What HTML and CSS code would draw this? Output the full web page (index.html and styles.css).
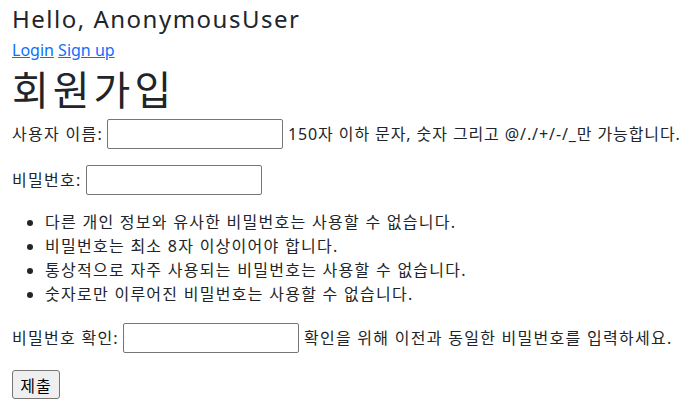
FILE: index.html
```html
<!DOCTYPE html>
<html lang="ko">
<head>
<meta charset="utf-8">
<title>회원가입</title>
<link rel="stylesheet" href="styles.css">
</head>
<body>
<div class="container">
  <h3 class="greeting">Hello, AnonymousUser</h3>
  <div class="links"><a href="#">Login</a> <a href="#">Sign up</a></div>
  <h1 class="title">회원가입</h1>
  <form class="signup">
    <p class="row"><label class="ko">사용자 이름:</label><input type="text" class="field"><span class="helptext mixed">150자 이하 문자, 숫자 그리고 @/./+/-/_만 가능합니다.</span></p>
    <p class="row"><label class="ko">비밀번호:</label><input type="password" class="field"></p>
    <ul class="rules ko">
      <li>다른 개인 정보와 유사한 비밀번호는 사용할 수 없습니다.</li>
      <li>비밀번호는 최소 8자 이상이어야 합니다.</li>
      <li>통상적으로 자주 사용되는 비밀번호는 사용할 수 없습니다.</li>
      <li>숫자로만 이루어진 비밀번호는 사용할 수 없습니다.</li>
    </ul>
    <p class="row"><label class="ko">비밀번호 확인:</label><input type="password" class="field"><span class="helptext ko">확인을 위해 이전과 동일한 비밀번호를 입력하세요.</span></p>
    <button type="button" class="submit">제출</button>
  </form>
</div>
</body>
</html>
```
FILE: styles.css
```css
* { box-sizing: border-box; }
html, body { margin: 0; padding: 0; background: #fff; }
body {
  font-family: "Noto Sans", "Noto Sans CJK KR", sans-serif;
  font-size: 16px;
  line-height: 24px;
  color: #212529;
}
.container { padding: 0 12px; }
.greeting {
  margin: 1px 0 0 0;
  font-size: 24px;
  font-weight: 400;
  line-height: 36px;
  letter-spacing: 1.5px;
}
.links { margin-top: 1px; line-height: 24px; font-size: 16px; }
.links a { color: #0d6efd; text-decoration: underline; }
.title {
  margin: 4px 0 5px 0;
  font-size: 40px;
  font-weight: 400;
  line-height: 48px;
  letter-spacing: 4px;
}
.ko { letter-spacing: 1.27px; }
.mixed { letter-spacing: 0.9px; }
.signup .row {
  display: flex;
  align-items: center;
  gap: 4px;
  margin: 0 0 16px 0;
  line-height: 30px;
  white-space: nowrap;
}
.signup .row:nth-of-type(2) { margin-bottom: 15px; }
.signup .row:nth-of-type(3) { margin-bottom: 17px; }
.field {
  width: 176px;
  height: 30px;
  border: 1px solid #767676;
  border-radius: 2px;
  padding: 1px 2px;
  font: inherit;
  background: #fff;
}
.helptext { margin-left: 1px; }
.rules { margin: 0 0 17px 0; padding-left: 33px; }
.rules li { line-height: 24px; }
.submit {
  display: block;
  width: 48px;
  height: 29px;
  padding: 0;
  border: 1px solid #767676;
  border-radius: 3px;
  background: #efefef;
  font-family: inherit;
  font-size: 16px;
  letter-spacing: 1px;
  color: #000;
}
```
